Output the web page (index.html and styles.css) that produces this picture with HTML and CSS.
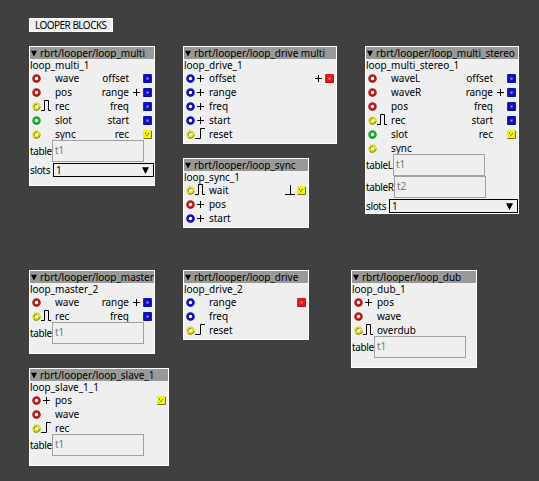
FILE: index.html
```
<!DOCTYPE html>
<html lang="en">
<head>
<meta charset="utf-8">
<title>Looper blocks</title>
<link rel="stylesheet" href="styles.css">
</head>
<body>
<svg class="defs" aria-hidden="true">
  <symbol id="in" viewBox="0 0 9 9"><circle cx="4.5" cy="4.5" r="3" fill="#fff" stroke="currentColor" stroke-width="2.6"/><path d="M1.6 7A4 4 0 0 0 7.4 7" fill="none" stroke="#000" stroke-opacity=".25"/></symbol>
  <symbol id="inb" viewBox="0 0 9 9"><circle cx="4.5" cy="4.5" r="3" fill="#f4f4d8" stroke="#e0dc2c" stroke-width="2.6"/><path d="M2.5 5.5A2.2 2.2 0 0 1 5 2.4M1.8 7.4A4 4 0 0 0 8.2 5" fill="none" stroke="#57551c" stroke-opacity=".8" stroke-width=".9"/></symbol>
  <symbol id="out" viewBox="0 0 9 9"><rect x=".1" y=".1" width="8.8" height="8.8" rx=".9" fill="currentColor"/><path d="M.5 8.5H8.5V1" fill="none" stroke="#000" stroke-opacity=".25"/><path d="M3 3h3v3H3z" fill="#fff" fill-opacity=".2"/><path d="M4 4h1.2v1.2H4z" fill="#fff" fill-opacity=".55"/></symbol>
  <symbol id="outb" viewBox="0 0 9 9"><rect width="9" height="9" fill="#f2ef1c"/><path d="M.5 8.5H8.5V1" fill="none" stroke="#77741b"/><path d="M2.5 2.5V4M3 6.2L6 3" fill="none" stroke="#67651c" stroke-width=".9"/></symbol>
  <symbol id="plus" viewBox="0 0 10 12"><path d="M2 6.5H9M5.5 3V10" fill="none" stroke="#000"/></symbol>
  <symbol id="pulse" viewBox="0 0 10 12"><path d="M0 10.5H3.5V.5H7.5V10.5H10" fill="none" stroke="#000"/></symbol>
  <symbol id="rise" viewBox="0 0 10 12"><path d="M0 10.5H5.5V.5H10" fill="none" stroke="#000"/></symbol>
  <symbol id="spike" viewBox="0 0 10 12"><path d="M0 10.5H10M5.5 1V10.5" fill="none" stroke="#000"/></symbol>
  <symbol id="tri" viewBox="0 0 7 7"><path d="M0 .3H7L3.5 7Z"/></symbol>
</svg>
<main class="canvas">
  <div class="note">LOOPER BLOCKS</div>

  <section class="block multi">
    <header><svg><use href="#tri"/></svg><span>rbrt/looper/loop_multi</span></header>
    <div class="name">loop_multi_1</div>
    <div class="row"><svg class="port red"><use href="#in"/></svg><svg class="mod"></svg><span>wave</span><b>offset</b><svg class="mod"></svg><svg class="port blue"><use href="#out"/></svg></div>
    <div class="row"><svg class="port red"><use href="#in"/></svg><svg class="mod"></svg><span>pos</span><b>range</b><svg class="mod"><use href="#plus"/></svg><svg class="port blue"><use href="#out"/></svg></div>
    <div class="row"><svg class="port"><use href="#inb"/></svg><svg class="mod"><use href="#pulse"/></svg><span>rec</span><b>freq</b><svg class="mod"></svg><svg class="port blue"><use href="#out"/></svg></div>
    <div class="row"><svg class="port green"><use href="#in"/></svg><svg class="mod"></svg><span>slot</span><b>start</b><svg class="mod"></svg><svg class="port blue"><use href="#out"/></svg></div>
    <div class="row"><svg class="port"><use href="#inb"/></svg><svg class="mod"></svg><span>sync</span><b>rec</b><svg class="mod"></svg><svg class="port"><use href="#outb"/></svg></div>
    <div class="attr"><label>table</label><div class="field">t1</div></div>
    <div class="attr choice"><label>slots</label><div class="select"><span>1</span><svg><use href="#tri"/></svg></div></div>
  </section>

  <section class="block drive-multi">
    <header><svg><use href="#tri"/></svg><span>rbrt/looper/loop_drive multi</span></header>
    <div class="name">loop_drive_1</div>
    <div class="row"><svg class="port blue"><use href="#in"/></svg><svg class="mod"><use href="#plus"/></svg><span>offset</span><b></b><svg class="mod"><use href="#plus"/></svg><svg class="port bright"><use href="#out"/></svg></div>
    <div class="row"><svg class="port blue"><use href="#in"/></svg><svg class="mod"><use href="#plus"/></svg><span>range</span></div>
    <div class="row"><svg class="port blue"><use href="#in"/></svg><svg class="mod"><use href="#plus"/></svg><span>freq</span></div>
    <div class="row"><svg class="port blue"><use href="#in"/></svg><svg class="mod"><use href="#plus"/></svg><span>start</span></div>
    <div class="row"><svg class="port"><use href="#inb"/></svg><svg class="mod"><use href="#rise"/></svg><span>reset</span></div>
  </section>

  <section class="block sync">
    <header><svg><use href="#tri"/></svg><span>rbrt/looper/loop_sync</span></header>
    <div class="name">loop_sync_1</div>
    <div class="row"><svg class="port"><use href="#inb"/></svg><svg class="mod"><use href="#pulse"/></svg><span>wait</span><b></b><svg class="mod"><use href="#spike"/></svg><svg class="port"><use href="#outb"/></svg></div>
    <div class="row"><svg class="port red"><use href="#in"/></svg><svg class="mod"><use href="#plus"/></svg><span>pos</span></div>
    <div class="row"><svg class="port blue"><use href="#in"/></svg><svg class="mod"><use href="#plus"/></svg><span>start</span></div>
  </section>

  <section class="block stereo">
    <header><svg><use href="#tri"/></svg><span>rbrt/looper/loop_multi_stereo</span></header>
    <div class="name">loop_multi_stereo_1</div>
    <div class="row"><svg class="port red"><use href="#in"/></svg><svg class="mod"></svg><span>waveL</span><b>offset</b><svg class="mod"></svg><svg class="port blue"><use href="#out"/></svg></div>
    <div class="row"><svg class="port red"><use href="#in"/></svg><svg class="mod"></svg><span>waveR</span><b>range</b><svg class="mod"><use href="#plus"/></svg><svg class="port blue"><use href="#out"/></svg></div>
    <div class="row"><svg class="port red"><use href="#in"/></svg><svg class="mod"></svg><span>pos</span><b>freq</b><svg class="mod"></svg><svg class="port blue"><use href="#out"/></svg></div>
    <div class="row"><svg class="port"><use href="#inb"/></svg><svg class="mod"><use href="#pulse"/></svg><span>rec</span><b>start</b><svg class="mod"></svg><svg class="port blue"><use href="#out"/></svg></div>
    <div class="row"><svg class="port green"><use href="#in"/></svg><svg class="mod"></svg><span>slot</span><b>rec</b><svg class="mod"></svg><svg class="port"><use href="#outb"/></svg></div>
    <div class="row"><svg class="port"><use href="#inb"/></svg><svg class="mod"></svg><span>sync</span></div>
    <div class="attr left"><label>tableL</label><div class="field">t1</div></div>
    <div class="attr right"><label>tableR</label><div class="field">t2</div></div>
    <div class="attr choice"><label>slots</label><div class="select"><span>1</span><svg><use href="#tri"/></svg></div></div>
  </section>

  <section class="block master">
    <header><svg><use href="#tri"/></svg><span>rbrt/looper/loop_master</span></header>
    <div class="name">loop_master_2</div>
    <div class="row"><svg class="port red"><use href="#in"/></svg><svg class="mod"></svg><span>wave</span><b>range</b><svg class="mod"><use href="#plus"/></svg><svg class="port blue"><use href="#out"/></svg></div>
    <div class="row"><svg class="port"><use href="#inb"/></svg><svg class="mod"><use href="#pulse"/></svg><span>rec</span><b>freq</b><svg class="mod"></svg><svg class="port blue"><use href="#out"/></svg></div>
    <div class="attr"><label>table</label><div class="field">t1</div></div>
  </section>

  <section class="block drive">
    <header><svg><use href="#tri"/></svg><span>rbrt/looper/loop_drive</span></header>
    <div class="name">loop_drive_2</div>
    <div class="row"><svg class="port blue"><use href="#in"/></svg><svg class="mod"></svg><span>range</span><b></b><svg class="mod"></svg><svg class="port bright"><use href="#out"/></svg></div>
    <div class="row"><svg class="port blue"><use href="#in"/></svg><svg class="mod"></svg><span>freq</span></div>
    <div class="row"><svg class="port"><use href="#inb"/></svg><svg class="mod"><use href="#rise"/></svg><span>reset</span></div>
  </section>

  <section class="block dub">
    <header><svg><use href="#tri"/></svg><span>rbrt/looper/loop_dub</span></header>
    <div class="name">loop_dub_1</div>
    <div class="row"><svg class="port red"><use href="#in"/></svg><svg class="mod"><use href="#plus"/></svg><span>pos</span></div>
    <div class="row"><svg class="port red"><use href="#in"/></svg><svg class="mod"></svg><span>wave</span></div>
    <div class="row"><svg class="port"><use href="#inb"/></svg><svg class="mod"><use href="#pulse"/></svg><span>overdub</span></div>
    <div class="attr"><label>table</label><div class="field">t1</div></div>
  </section>

  <section class="block slave">
    <header><svg><use href="#tri"/></svg><span>rbrt/looper/loop_slave_1</span></header>
    <div class="name">loop_slave_1_1</div>
    <div class="row"><svg class="port red"><use href="#in"/></svg><svg class="mod"><use href="#plus"/></svg><span>pos</span><b></b><svg class="mod"></svg><svg class="port"><use href="#outb"/></svg></div>
    <div class="row"><svg class="port red"><use href="#in"/></svg><svg class="mod"></svg><span>wave</span></div>
    <div class="row"><svg class="port"><use href="#inb"/></svg><svg class="mod"><use href="#rise"/></svg><span>rec</span></div>
    <div class="attr"><label>table</label><div class="field">t1</div></div>
  </section>
</main>
</body>
</html>
```
FILE: styles.css
```
* { box-sizing: border-box; }
body { margin: 0; background: #404040; }
.defs { position: absolute; width: 0; height: 0; }
.canvas {
  position: relative;
  width: 539px;
  height: 481px;
  overflow: hidden;
  background: #404040;
  color: #000;
  font: 10px/12px "Noto Sans", "Open Sans", sans-serif;
  letter-spacing: -.03px;
  white-space: nowrap;
}
.note, .block { position: absolute; background: #efefef; border: 1px solid #fff; }
.note { left: 29px; top: 18px; width: 84px; height: 14px; padding-left: 5px; letter-spacing: -.53px; }
.multi { left: 29px; top: 46px; width: 126px; height: 140px; }
.drive-multi { left: 183px; top: 46px; width: 154px; height: 98px; }
.sync { left: 183px; top: 158px; width: 126px; height: 70px; }
.stereo { left: 365px; top: 46px; width: 154px; height: 168px; }
.master { left: 29px; top: 270px; width: 126px; height: 84px; }
.drive { left: 183px; top: 270px; width: 126px; height: 70px; }
.dub { left: 351px; top: 270px; width: 126px; height: 98px; }
.slave { left: 29px; top: 368px; width: 140px; height: 98px; }

header { display: flex; align-items: center; gap: 3px; height: 12px; padding-left: 1px; background: #999; overflow: hidden; }
header svg { width: 6px; height: 7px; flex: none; }
.name { height: 12px; }
.row { display: flex; align-items: center; height: 14px; padding: 0 2px; }
.row span { margin-left: 4px; }
.row b { flex: 1; text-align: right; font-weight: 400; margin-right: 2px; }
.port { width: 9px; height: 9px; flex: none; }
.mod { width: 10px; height: 12px; flex: none; }
b + .mod { margin-right: 2px; }
.red { color: #b81c1c; }
.bright { color: #e01818; }
.blue { color: #1010b8; }
.green { color: #18ab35; }
.attr { display: flex; align-items: center; height: 22px; margin-top: -1px; }
.attr label { width: 22px; flex: none; letter-spacing: -.35px; }
.attr + .attr { margin-top: 0; }
.field { width: 92px; height: 22px; border: 1px solid #a0a0a0; padding: 3px 2px; color: #777; }
.left label { width: 27px; }
.right label { width: 28px; }
.choice { height: 15px; padding-top: 1px; }
.choice label { width: 23px; }
.select { flex: 1; display: flex; align-items: center; justify-content: space-between; height: 14px; border: 1px solid #000; padding: 0 4px 0 2px; }
.select svg { width: 7px; height: 7px; }
```
